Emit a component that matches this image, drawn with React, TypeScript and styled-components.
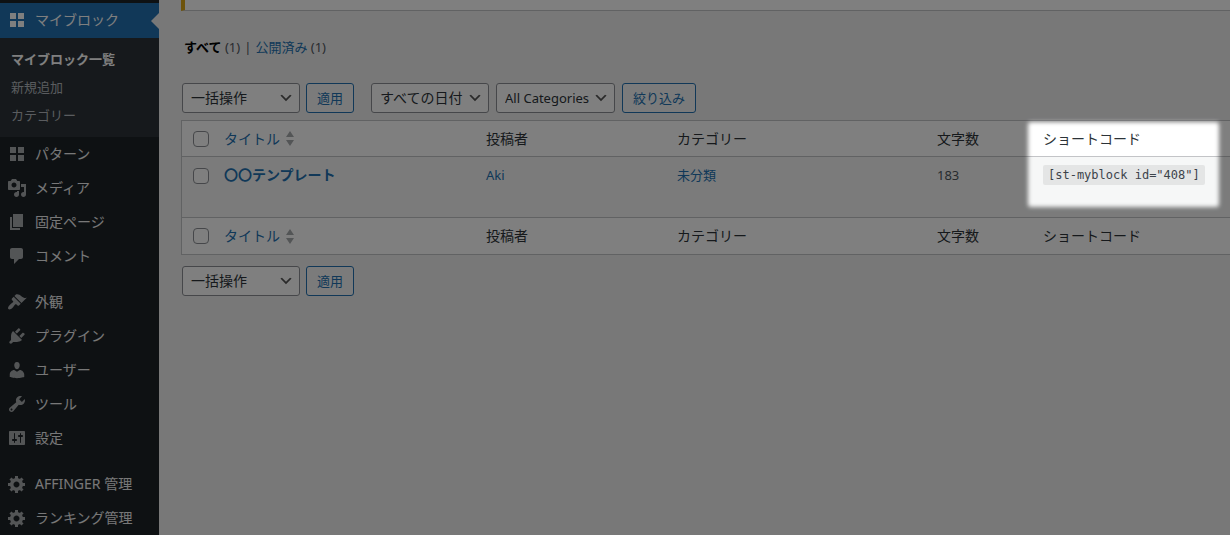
import React from "react";
import styled, { createGlobalStyle, css } from "styled-components";

const GlobalStyle = createGlobalStyle`
  *, *::before, *::after { box-sizing: border-box; }
  body {
    margin: 0;
    background: #f0f0f1;
    color: #3c434a;
    font-family: "Noto Sans", "Noto Sans CJK JP", sans-serif;
    font-size: 13px;
    line-height: 20px;
  }
  a { text-decoration: none; }
  ul { list-style: none; margin: 0; padding: 0; }
`;

const Page = styled.div`
  position: relative;
  display: flex;
  min-height: 100vh;
  overflow: hidden;
`;

/* ---------- Sidebar ---------- */

const Sidebar = styled.nav`
  flex: 0 0 159px;
  padding-top: 3px;
  background: #1d2327;
`;

const MenuGroup = styled.ul`
  & + & {
    margin-top: 12px;
  }
`;

const MenuLink = styled.a<{ $current?: boolean }>`
  position: relative;
  display: flex;
  align-items: center;
  gap: 8px;
  height: 34px;
  padding-left: 7px;
  color: #f0f0f1;
  font-size: 14px;
  white-space: nowrap;

  svg {
    flex: none;
    fill: #a7aaad;
  }

  ${(p) =>
    p.$current &&
    css`
      height: 35px;
      padding-bottom: 1px;
      background: #2271b1;
      color: #fff;

      svg {
        fill: #fff;
      }

      &::after {
        content: "";
        position: absolute;
        right: 0;
        top: 50%;
        margin-top: -8px;
        border: 8px solid transparent;
        border-left-width: 0;
        border-right-color: #f0f0f1;
      }
    `}
`;

const SubMenu = styled.ul`
  padding: 7px 0 8px;
  background: #2c3338;
`;

const SubMenuLink = styled.a<{ $current?: boolean }>`
  display: block;
  padding: 4px 11px;
  color: ${(p) => (p.$current ? "#fff" : "#b4b9be")};
  font-weight: ${(p) => (p.$current ? 700 : 400)};
  white-space: nowrap;
`;

const iconPaths = {
  grid: "M9 9V3H3v6h6zm8 0V3h-6v6h6zm-8 8v-6H3v6h6zm8 0v-6h-6v6h6z",
  media:
    "M13 11V4c0-.55-.45-1-1-1h-1.67L9 1H5L3.67 3H2c-.55 0-1 .45-1 1v7c0 .55.45 1 1 1h10c.55 0 1-.45 1-1zM7 4.5c1.38 0 2.5 1.12 2.5 2.5S8.38 9.5 7 9.5 4.5 8.38 4.5 7 5.62 4.5 7 4.5zM14 6h5v10.5c0 1.38-1.12 2.5-2.5 2.5S14 17.88 14 16.5s1.12-2.5 2.5-2.5c.17 0 .34.02.5.05V9h-3V6zm-4 8.05V13h2v3.5c0 1.38-1.12 2.5-2.5 2.5S7 17.88 7 16.5 8.12 14 9.5 14c.17 0 .34.02.5.05z",
  page: "M6 15V2h10v13H6zm-1 1h8v2H3V5h2v11z",
  comment:
    "M5 2h9c1.1 0 2 .9 2 2v7c0 1.1-.9 2-2 2h-2l-5 5v-5H5c-1.1 0-2-.9-2-2V4c0-1.1.9-2 2-2z",
  appearance:
    "M14.48 11.06L7.41 3.99l1.5-1.5c.5-.56 2.3-.47 3.51.32 1.21.8 1.43 1.28 2.91 2.1 1.18.64 2.45 1.26 4.45.85zm-.71.71L6.7 4.7 4.93 6.47c-.39.39-.39 1.02 0 1.41l1.06 1.06c.39.39.39 1.03 0 1.42-.6.6-1.43 1.11-2.21 1.69-.35.26-.7.53-1.01.84C1.43 14.23.4 16.08 1.4 17.07c.99 1 2.84-.03 4.18-1.36.31-.31.58-.66.85-1.02.57-.78 1.08-1.61 1.69-2.21.39-.39 1.02-.39 1.41 0l1.06 1.06c.39.39 1.02.39 1.41 0z",
  plugin:
    "M13.11 4.36L9.87 7.6 8 5.73l3.24-3.24c.35-.34 1.05-.2 1.56.32.52.51.66 1.21.31 1.55zm-8 1.77l.91-1.12 9.01 9.01-1.19.84c-.71.71-2.63 1.16-3.82 1.16H6.14L4.9 17.26c-.59.59-1.54.59-2.12 0-.59-.58-.59-1.53 0-2.12l1.24-1.24v-3.88c0-1.13.4-3.19 1.09-3.89zm7.26 3.97l3.24-3.24c.34-.35 1.04-.21 1.55.31.52.51.66 1.21.31 1.55l-3.24 3.25z",
  user: "M10 9.25c-2.27 0-2.73-3.44-2.73-3.44C7 4.02 7.82 2 9.97 2c2.16 0 2.98 2.02 2.71 3.81 0 0-.41 3.44-2.68 3.44zm0 2.57L12.72 10c2.39 0 4.52 2.33 4.52 4.53v2.49s-3.65 1.13-7.24 1.13c-3.65 0-7.24-1.13-7.24-1.13v-2.49c0-2.25 1.94-4.48 4.47-4.48z",
  tools:
    "M16.68 9.77c-1.34 1.34-3.3 1.67-4.95.99l-5.41 6.52c-.99.99-2.59.99-3.58 0s-.99-2.59 0-3.57l6.52-5.42c-.68-1.65-.35-3.61.99-4.95 1.28-1.28 3.12-1.62 4.72-1.06l-2.89 2.89 2.82 2.82 2.86-2.87c.53 1.58.18 3.39-1.08 4.65zM3.81 16.21c.4.39 1.04.39 1.43 0 .4-.4.4-1.04 0-1.43-.39-.4-1.03-.4-1.43 0-.39.39-.39 1.03 0 1.43z",
  settings:
    "M18 16V4c0-.55-.45-1-1-1H3c-.55 0-1 .45-1 1v12c0 .55.45 1 1 1h14c.55 0 1-.45 1-1zM8 11h1c.55 0 1 .45 1 1s-.45 1-1 1H8v1.5c0 .28-.22.5-.5.5s-.5-.22-.5-.5V13H6c-.55 0-1-.45-1-1s.45-1 1-1h1V5.5c0-.28.22-.5.5-.5s.5.22.5.5V11zm5-2h-1c-.55 0-1-.45-1-1s.45-1 1-1h1V5.5c0-.28.22-.5.5-.5s.5.22.5.5V7h1c.55 0 1 .45 1 1s-.45 1-1 1h-1v5.5c0 .28-.22.5-.5.5s-.5-.22-.5-.5V9z",
  gear: "M18 12h-2.18c-.17.7-.44 1.35-.81 1.93l1.54 1.54-2.1 2.1-1.54-1.54c-.58.36-1.23.63-1.91.79V19H8v-2.18c-.68-.16-1.33-.43-1.91-.79l-1.54 1.54-2.12-2.12 1.54-1.54c-.36-.58-.63-1.23-.79-1.91H1V9.03h2.17c.16-.7.44-1.35.8-1.94L2.43 5.55l2.1-2.1 1.54 1.54c.58-.37 1.24-.64 1.93-.81V2h3v2.18c.68.16 1.33.43 1.91.79l1.54-1.54 2.12 2.12-1.54 1.54c.36.59.64 1.24.8 1.94H18V12zm-8.5 1.5c1.66 0 3-1.34 3-3s-1.34-3-3-3-3 1.34-3 3 1.34 3 3 3z",
};

type IconName = keyof typeof iconPaths;

const MenuIcon = ({ name }: { name: IconName }) => (
  <svg width="20" height="20" viewBox="0 0 20 20" aria-hidden="true">
    <path fillRule="evenodd" d={iconPaths[name]} />
  </svg>
);

const menuGroups: { label: string; icon: IconName }[][] = [
  [
    { label: "パターン", icon: "grid" },
    { label: "メディア", icon: "media" },
    { label: "固定ページ", icon: "page" },
    { label: "コメント", icon: "comment" },
  ],
  [
    { label: "外観", icon: "appearance" },
    { label: "プラグイン", icon: "plugin" },
    { label: "ユーザー", icon: "user" },
    { label: "ツール", icon: "tools" },
    { label: "設定", icon: "settings" },
  ],
  [
    { label: "AFFINGER 管理", icon: "gear" },
    { label: "ランキング管理", icon: "gear" },
  ],
];

const MenuItem = ({ label, icon }: { label: string; icon: IconName }) => (
  <li>
    <MenuLink href="#">
      <MenuIcon name={icon} />
      {label}
    </MenuLink>
  </li>
);

/* ---------- Content ---------- */

const Content = styled.main`
  flex: 1;
  min-width: 0;
  padding-left: 22px;
`;

const Notice = styled.div`
  height: 11px;
  border-left: 4px solid #dba617;
  border-bottom: 1px solid #c3c4c7;
  background: #fff;
`;

const StatusFilters = styled.ul`
  display: flex;
  gap: 4px;
  margin: 26px 0;
  padding-left: 3px;
  color: #50575e;

  li + li::before {
    content: "|";
    margin-right: 4px;
  }
`;

const FilterLink = styled.a<{ $current?: boolean }>`
  color: ${(p) => (p.$current ? "#000" : "#2271b1")};
  font-weight: ${(p) => (p.$current ? 700 : 400)};
`;

const Toolbar = styled.div<{ $bottom?: boolean }>`
  display: flex;
  gap: 17px;
  margin: ${(p) => (p.$bottom ? "11px 0 0" : "0 0 7px")};
  padding-left: 1px;
`;

const ControlGroup = styled.div<{ $gap?: number }>`
  display: flex;
  gap: ${(p) => p.$gap ?? 6}px;
`;

const SelectBox = styled.div`
  display: grid;
  align-items: center;

  > * {
    grid-area: 1 / 1;
  }

  svg {
    justify-self: end;
    margin-right: 6px;
    pointer-events: none;
  }
`;

const Select = styled.select<{ $latin?: boolean }>`
  appearance: none;
  height: 30px;
  margin: 0;
  padding: 0 24px 1px 8px;
  border: 1px solid #8c8f94;
  border-radius: 3px;
  background: #fff;
  color: #2c3338;
  font-family: inherit;
  font-size: ${(p) => (p.$latin ? 13 : 14)}px;
`;

const Button = styled.button`
  height: 30px;
  padding: 0 10px 2px;
  border: 1px solid #2271b1;
  border-radius: 3px;
  background: #f6f7f7;
  color: #2271b1;
  font-family: inherit;
  font-size: 13px;
  white-space: nowrap;
`;

const Dropdown = ({
  label,
  options,
  latin,
}: {
  label: string;
  options: string[];
  latin?: boolean;
}) => (
  <SelectBox>
    <Select aria-label={label} $latin={latin}>
      {options.map((o) => (
        <option key={o}>{o}</option>
      ))}
    </Select>
    <svg width="16" height="16" viewBox="0 0 20 20" aria-hidden="true">
      <path d="M5 6l5 5 5-5 2 1-7 7-7-7 2-1z" fill="#555" />
    </svg>
  </SelectBox>
);

const BulkActions = ({ label }: { label: string }) => (
  <ControlGroup>
    <Dropdown label={label} options={["一括操作", "編集", "ゴミ箱へ移動"]} />
    <Button type="button">適用</Button>
  </ControlGroup>
);

const Table = styled.table`
  width: 100%;
  table-layout: fixed;
  border: 1px solid #c3c4c7;
  border-right: 0;
  border-spacing: 0;
  background: #fff;
`;

const Col = styled.col<{ $width?: number }>`
  width: ${(p) => (p.$width ? `${p.$width}px` : "auto")};
`;

const HeadCell = styled.th<{ $foot?: boolean }>`
  position: relative;
  height: 36px;
  padding: 0 8px;
  border: 0 solid #c3c4c7;
  border-width: ${(p) => (p.$foot ? "0" : "0 0 1px")};
  color: #2c3338;
  font-size: 14px;
  font-weight: 400;
  text-align: left;
  white-space: nowrap;
`;

const CheckHead = styled(HeadCell)`
  padding: 0 0 0 11px;
`;

const Cell = styled.td`
  height: 61px;
  padding: 8px;
  border-bottom: 1px solid #c3c4c7;
  background: #f6f7f7;
  color: #50575e;
  vertical-align: top;
  white-space: nowrap;
`;

const CheckCell = styled(Cell)`
  padding: 11px 0 0 11px;
`;

const Checkbox = styled.input.attrs({ type: "checkbox" })`
  appearance: none;
  display: block;
  width: 16px;
  height: 16px;
  margin: 0;
  border: 1px solid #8c8f94;
  border-radius: 4px;
  background: #fff;
`;

const CellLink = styled.a`
  color: #2271b1;
`;

const RowTitle = styled(CellLink)`
  font-size: 14px;
  font-weight: 700;
`;

const SortLink = styled.a`
  display: flex;
  align-items: center;
  gap: 6px;
  color: #2271b1;
`;

const Code = styled.code`
  display: block;
  width: fit-content;
  height: 20px;
  padding: 0 5px;
  border-radius: 2px;
  background: rgba(0, 0, 0, 0.07);
  color: #3c434a;
  font-family: "DejaVu Sans Mono", monospace;
  font-size: 12px;
`;

/* Dims everything on the page except a soft-edged box around the shortcode */
const Spotlight = styled.div`
  position: absolute;
  z-index: 10;
  top: 1px;
  left: -7px;
  right: 11px;
  height: 85px;
  border-radius: 3px;
  box-shadow: 0 0 0 2000px rgba(0, 0, 0, 0.5);
  filter: blur(2px);
  pointer-events: none;
`;

const SortableTitle = () => (
  <SortLink href="#">
    タイトル
    <svg width="8" height="15" viewBox="0 0 8 15" aria-hidden="true">
      <path d="M4 0l4 6H0zM4 15L0 9h8z" fill="#a7aaad" />
    </svg>
  </SortLink>
);

const HeadingRow = ({ foot }: { foot?: boolean }) => (
  <tr>
    <CheckHead $foot={foot}>
      <Checkbox aria-label="すべて選択" />
    </CheckHead>
    <HeadCell $foot={foot}>
      <SortableTitle />
    </HeadCell>
    <HeadCell $foot={foot}>投稿者</HeadCell>
    <HeadCell $foot={foot}>カテゴリー</HeadCell>
    <HeadCell $foot={foot}>文字数</HeadCell>
    <HeadCell $foot={foot}>
      ショートコード
      {!foot && <Spotlight />}
    </HeadCell>
  </tr>
);

export default function App() {
  return (
    <>
      <GlobalStyle />
      <Page>
        <Sidebar>
          <MenuLink href="#" $current>
            <MenuIcon name="grid" />
            マイブロック
          </MenuLink>
          <SubMenu>
            <li>
              <SubMenuLink href="#" $current>
                マイブロック一覧
              </SubMenuLink>
            </li>
            <li>
              <SubMenuLink href="#">新規追加</SubMenuLink>
            </li>
            <li>
              <SubMenuLink href="#">カテゴリー</SubMenuLink>
            </li>
          </SubMenu>
          {menuGroups.map((group) => (
            <MenuGroup key={group[0].label}>
              {group.map((item) => (
                <MenuItem key={item.label} {...item} />
              ))}
            </MenuGroup>
          ))}
        </Sidebar>

        <Content>
          <Notice />
          <StatusFilters>
            <li>
              <FilterLink href="#" $current>
                すべて
              </FilterLink>{" "}
              (1)
            </li>
            <li>
              <FilterLink href="#">公開済み</FilterLink> (1)
            </li>
          </StatusFilters>

          <Toolbar>
            <BulkActions label="一括操作を選択" />
            <ControlGroup $gap={7}>
              <Dropdown label="日付で絞り込む" options={["すべての日付"]} />
              <Dropdown
                label="カテゴリーで絞り込む"
                options={["All Categories"]}
                latin
              />
              <Button type="button">絞り込み</Button>
            </ControlGroup>
          </Toolbar>

          <Table>
            <colgroup>
              <Col $width={34} />
              <Col />
              <Col $width={191} />
              <Col $width={260} />
              <Col $width={106} />
              <Col $width={195} />
            </colgroup>
            <thead>
              <HeadingRow />
            </thead>
            <tbody>
              <tr>
                <CheckCell>
                  <Checkbox aria-label="〇〇テンプレートを選択" />
                </CheckCell>
                <Cell>
                  <RowTitle href="#">〇〇テンプレート</RowTitle>
                </Cell>
                <Cell>
                  <CellLink href="#">Aki</CellLink>
                </Cell>
                <Cell>
                  <CellLink href="#">未分類</CellLink>
                </Cell>
                <Cell>183</Cell>
                <Cell>
                  <Code>[st-myblock id="408"]</Code>
                </Cell>
              </tr>
            </tbody>
            <tfoot>
              <HeadingRow foot />
            </tfoot>
          </Table>

          <Toolbar $bottom>
            <BulkActions label="一括操作を選択（下）" />
          </Toolbar>
        </Content>
      </Page>
    </>
  );
}
